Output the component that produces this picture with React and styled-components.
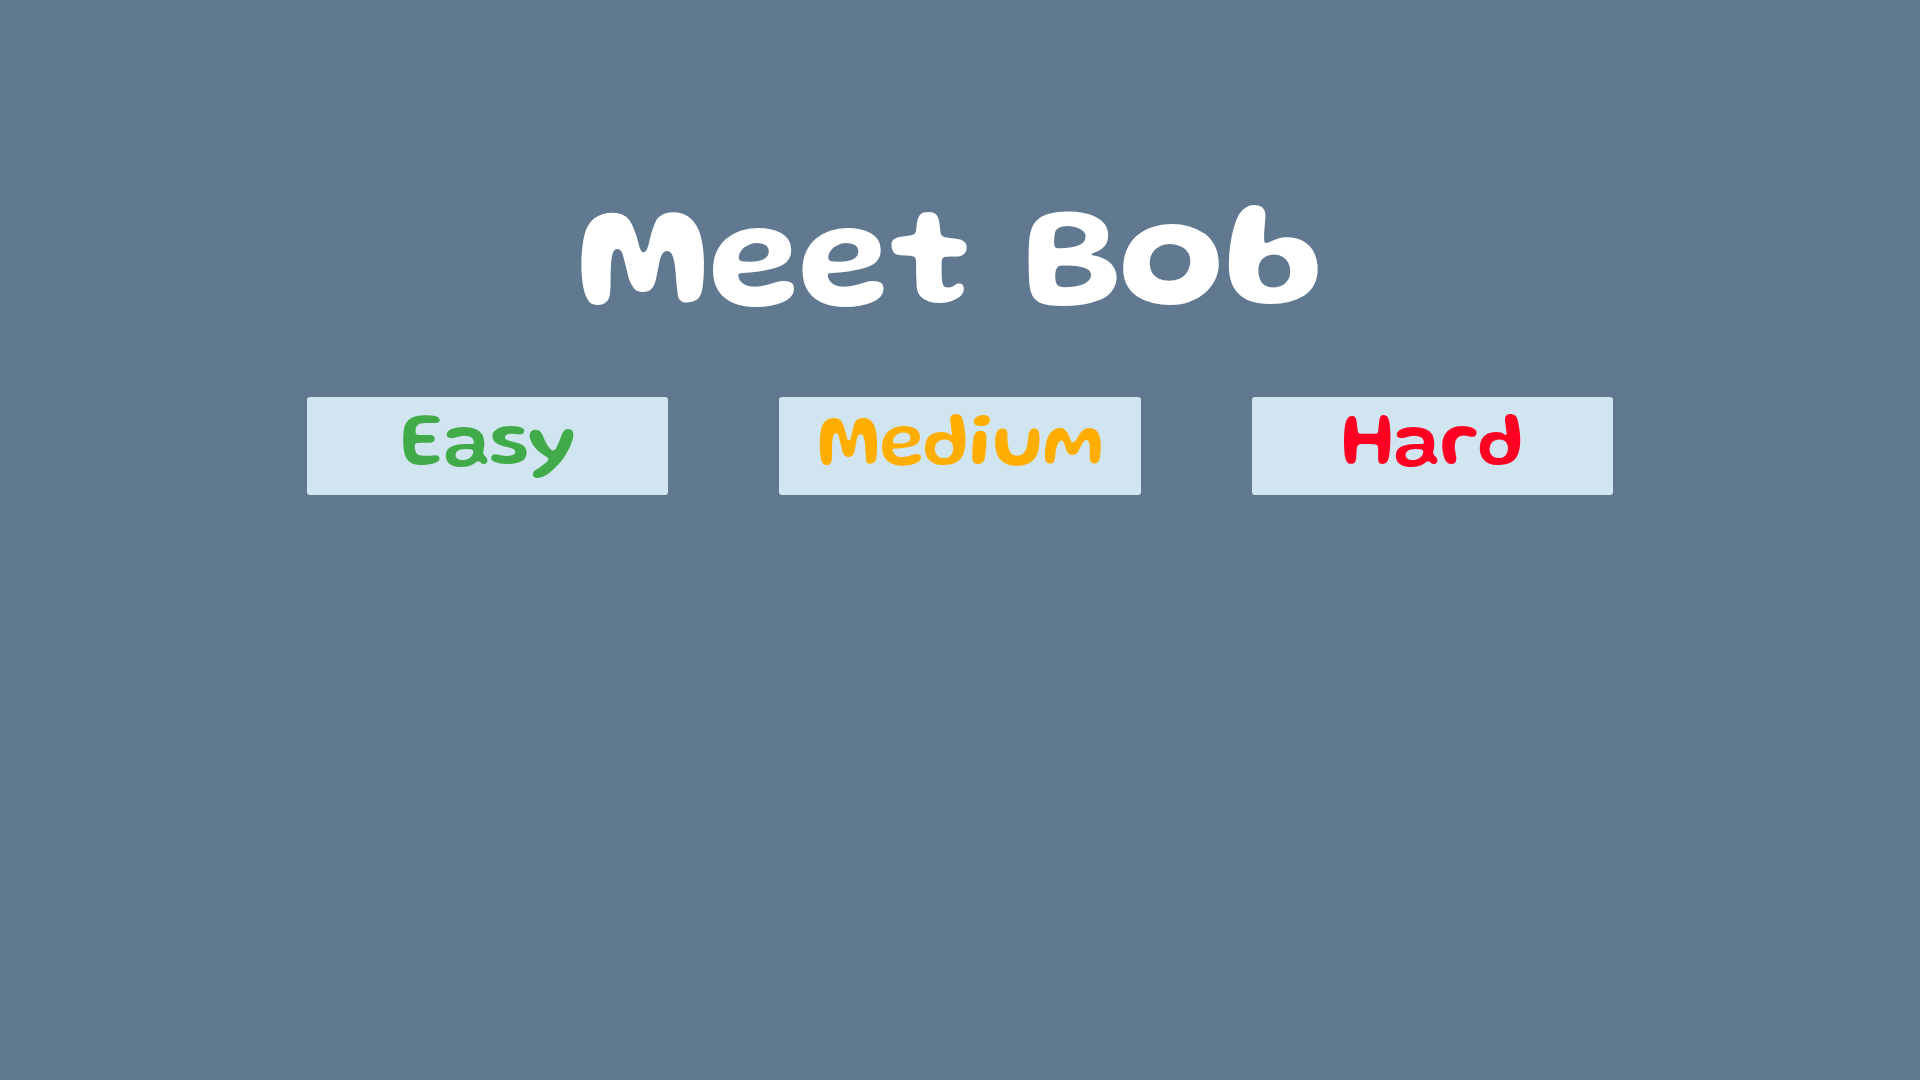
import React from 'react'
import styled, { createGlobalStyle } from 'styled-components'

const GlobalStyle = createGlobalStyle`
    * {
        box-sizing: border-box;
    }

    body {
        margin: 0;
        background-color: #607890;
        font-family: Gluten, DynaPuff, "Baloo 2", Lato, "Open Sans", sans-serif;
    }
`

const Container = styled.main`
    display: flex;
    flex-direction: column;
    align-items: center;
    padding: 191px 16% 0px;
`

const Title = styled.h1`
    margin: 0px 0px 46px;
    padding-right: 20px;
    color: white;
    font-size: 150px;
    font-weight: 600;
    line-height: 160px;
    text-align: center;
`

const Levels = styled.div`
    display: grid;
    grid-template-columns: repeat(3, 1fr);
    gap: 111px;
    width: 100%;
`

const LevelButton = styled.button`
    height: 98px;
    padding: 3px 0px 0px;
    border: none;
    border-radius: 3px;
    background-color: #d1e5f0;
    color: ${props=>props.$color};
    font-family: inherit;
    font-size: 75px;
    font-weight: 500;
    line-height: 90px;
    cursor: pointer;
`

const levels = [
    { name: "Easy", color: "#42ab49" },
    { name: "Medium", color: "#ffae00" },
    { name: "Hard", color: "#ff0022" },
]

const App = () => {
  return (
    <>
        <GlobalStyle/>
        <Container>
            <Title>Meet Bob</Title>
            <Levels>
                {levels.map(level=>(
                    <LevelButton key={level.name} type="button" $color={level.color}>{level.name}</LevelButton>
                ))}
            </Levels>
        </Container>
    </>
  )
}

export default App
